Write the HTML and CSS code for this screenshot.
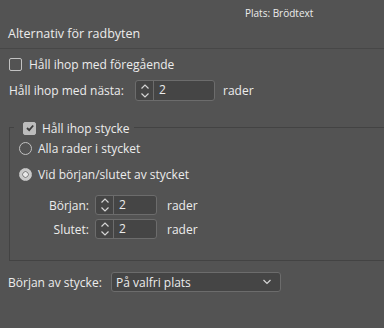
FILE: index.html
```html
<!DOCTYPE html>
<html lang="sv">
<head>
    <meta charset="UTF-8">
    <title>Alternativ för radbyten</title>
    <link rel="stylesheet" href="styles.css">
</head>
<body>
    <div class="top-info">Plats: Brödtext</div>
    <div class="section-title">Alternativ för radbyten</div>
    <div class="separator"></div>

    <div class="row check-row">
        <span class="checkbox"></span>
        <span>Håll ihop med föregående</span>
    </div>

    <div class="row spin-row">
        <span class="label">Håll ihop med nästa:</span>
        <div class="spinner wide">
            <span class="arrows">
                <svg width="10" height="16" viewBox="0 0 10 16"><path d="M1.5 5.5 L5 2 L8.5 5.5 M1.5 10.5 L5 14 L8.5 10.5" fill="none" stroke="#d6d6d6" stroke-width="1.2"/></svg>
            </span>
            <span class="value">2</span>
        </div>
        <span class="unit">rader</span>
    </div>

    <div class="group">
        <div class="legend">
            <span class="checkbox checked">
                <svg width="10" height="10" viewBox="0 0 10 10"><path d="M2 5 L4.2 7.2 L8.2 2.5" fill="none" stroke="#3c3c3c" stroke-width="1.8"/></svg>
            </span>
            <span>Håll ihop stycke</span>
        </div>
        <div class="row radio-row first">
            <span class="radio"></span>
            <span>Alla rader i stycket</span>
        </div>
        <div class="row radio-row second">
            <span class="radio selected"></span>
            <span>Vid början/slutet av stycket</span>
        </div>
        <div class="sub-rows">
            <div class="row sub-row">
                <span class="label right">Början:</span>
                <div class="spinner small">
                    <span class="arrows">
                        <svg width="10" height="16" viewBox="0 0 10 16"><path d="M1.5 5.5 L5 2 L8.5 5.5 M1.5 10.5 L5 14 L8.5 10.5" fill="none" stroke="#d6d6d6" stroke-width="1.2"/></svg>
                    </span>
                    <span class="value">2</span>
                </div>
                <span class="unit">rader</span>
            </div>
            <div class="row sub-row">
                <span class="label right">Slutet:</span>
                <div class="spinner small">
                    <span class="arrows">
                        <svg width="10" height="16" viewBox="0 0 10 16"><path d="M1.5 5.5 L5 2 L8.5 5.5 M1.5 10.5 L5 14 L8.5 10.5" fill="none" stroke="#d6d6d6" stroke-width="1.2"/></svg>
                    </span>
                    <span class="value">2</span>
                </div>
                <span class="unit">rader</span>
            </div>
        </div>
    </div>

    <div class="row select-row">
        <span class="label">Början av stycke:</span>
        <div class="select">
            <span>På valfri plats</span>
            <svg width="10" height="6" viewBox="0 0 10 6"><path d="M1.5 1 L5 4.5 L8.5 1" fill="none" stroke="#d6d6d6" stroke-width="1.2"/></svg>
        </div>
    </div>
</body>
</html>
```

FILE: styles.css
```css
body {
    margin: 0;
    background-color: #535353;
    color: #ececec;
    font-family: "Open Sans", "Liberation Sans", sans-serif;
    font-size: 12px;
    width: 384px;
    height: 328px;
    overflow: hidden;
}
.top-info {
    height: 21px;
    padding-left: 245px;
    font-size: 10px;
    line-height: 26px;
}
.section-title {
    padding-left: 8px;
    font-size: 12.5px;
    line-height: 26px;
    height: 27px;
}
.separator {
    height: 1px;
    background-color: #474747;
}
.row {
    display: flex;
    align-items: center;
}
.check-row {
    margin-top: 7px;
    padding-left: 9px;
    height: 16px;
    gap: 7px;
}
.checkbox {
    width: 11px;
    height: 11px;
    border: 1px solid #c2c2c2;
    border-radius: 2px;
    display: flex;
    align-items: center;
    justify-content: center;
}
.checkbox.checked {
    background-color: #bcbcbc;
    border-color: #bcbcbc;
}
.spin-row {
    margin-top: 8px;
    padding-left: 9px;
}
.spin-row .label {
    width: 126px;
}
.spinner {
    display: flex;
    height: 21px;
    border: 1px solid #6c6c6c;
    border-radius: 3px;
    background-color: #454545;
    box-sizing: border-box;
}
.spinner.wide {
    width: 80px;
}
.spinner.small {
    width: 62px;
    height: 20px;
}
.arrows {
    width: 17px;
    border-right: 1px solid #6c6c6c;
    display: flex;
    align-items: center;
    justify-content: center;
}
.value {
    padding-left: 5px;
    line-height: 18px;
}
.unit {
    margin-left: 8px;
}
.group {
    margin: 26px 0 0 9px;
    border: 1px solid #434343;
    border-right: none;
    height: 132px;
    position: relative;
}
.legend {
    position: absolute;
    top: -7px;
    left: 4px;
    padding: 0 4px 0 9px;
    background-color: #535353;
    display: flex;
    align-items: center;
    gap: 6px;
    height: 14px;
}
.radio-row {
    padding-left: 9px;
    gap: 6px;
}
.radio-row.first {
    margin-top: 12px;
}
.radio-row.second {
    margin-top: 9px;
}
.radio {
    width: 13px;
    height: 13px;
    border: 1px solid #c2c2c2;
    border-radius: 50%;
    box-sizing: border-box;
}
.radio.selected {
    background: radial-gradient(circle, #e8e8e8 0 2px, #8a8a8a 2.5px 3px, #c9c9c9 3.5px);
    border-color: #c9c9c9;
}
.sub-rows {
    margin-top: 12px;
    display: flex;
    flex-direction: column;
    gap: 4px;
}
.sub-row .label.right {
    width: 79px;
    text-align: right;
    padding-right: 6px;
}
.sub-row .unit {
    margin-left: 10px;
}
.select-row {
    margin-top: 11px;
    padding-left: 8px;
}
.select-row .label {
    width: 103px;
}
.select {
    width: 170px;
    height: 20px;
    box-sizing: border-box;
    border: 1px solid #6c6c6c;
    border-radius: 3px;
    background-color: #454545;
    display: flex;
    align-items: center;
    justify-content: space-between;
    padding: 0 8px 0 4px;
}
```
